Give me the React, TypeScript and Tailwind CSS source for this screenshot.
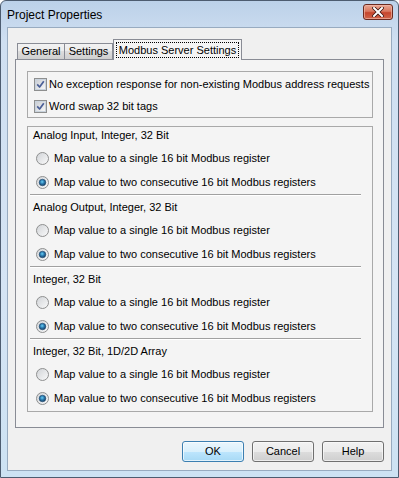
import React from "react"

const font = "font-['Liberation_Sans','Arial',sans-serif]"

function CheckBox() {
  return (
    <span className="flex h-[13px] w-[13px] shrink-0 items-center justify-center border border-[#8e8f8f] bg-white">
      <span className="flex h-[11px] w-[11px] items-center justify-center border border-[#c9d3dd] bg-[linear-gradient(135deg,#cbcfd5,#f6f6f6)]">
        <svg width="9" height="9" viewBox="0 0 9 9">
          <path d="M1.2 4.4 L3.6 7 L7.8 1.2" fill="none" stroke="#4a5f97" strokeWidth="1.7" strokeLinejoin="round" />
        </svg>
      </span>
    </span>
  )
}

function Radio({ on, id }: { on?: boolean; id: string }) {
  return (
    <svg width="13" height="13" viewBox="0 0 13 13" className="shrink-0">
      <defs>
        <linearGradient id={`rb-${id}`} x1="0" y1="0" x2="1" y2="1">
          <stop offset="0" stopColor="#cfd2d6" />
          <stop offset="1" stopColor="#fbfbfb" />
        </linearGradient>
        <radialGradient id={`rd-${id}`} cx="0.45" cy="0.4" r="0.6">
          <stop offset="0" stopColor="#6ad0f5" />
          <stop offset="0.5" stopColor="#2b7bb0" />
          <stop offset="1" stopColor="#173e62" />
        </radialGradient>
      </defs>
      <circle cx="6.5" cy="6.5" r="6" fill={`url(#rb-${id})`} stroke="#8e8f8f" />
      {on && <circle cx="6.5" cy="6.5" r="3.3" fill={`url(#rd-${id})`} stroke="#1e4a70" strokeWidth="0.6" />}
    </svg>
  )
}

function Section({ title, id, last }: { title: string; id: string; last?: boolean }) {
  return (
    <div className="flex flex-col">
      <div className="flex h-[17px] items-center pl-[5px]">{title}</div>
      <div className="h-[2px]" />
      <div className="flex h-[24px] items-center gap-[5px] pl-[8px]">
        <Radio id={`${id}a`} />
        <span>Map value to a single 16 bit Modbus register</span>
      </div>
      <div className="flex h-[24px] items-center gap-[5px] pl-[8px]">
        <Radio on id={`${id}b`} />
        <span>Map value to two consecutive 16 bit Modbus registers</span>
      </div>
      {!last && (
        <>
          <div className="ml-[2px] mr-[11px] h-[2px] border-t border-b border-t-[#a0a0a0] border-b-white" />
          <div className="h-[3px]" />
        </>
      )}
    </div>
  )
}

function Button({ label, primary }: { label: string; primary?: boolean }) {
  return (
    <div
      className={
        primary
          ? "flex h-[21px] w-[62px] items-center justify-center rounded-[3px] border border-[#3c7fb1] bg-[linear-gradient(#eaf6fd,#d9f0fc_50%,#bee6fd_50%,#a7d9f5)] shadow-[inset_0_0_0_1px_#ffffffaa]"
          : "flex h-[21px] w-[62px] items-center justify-center rounded-[3px] border border-[#707070] bg-[linear-gradient(#f2f2f2,#ebebeb_50%,#dddddd_50%,#cfcfcf)] shadow-[inset_0_0_0_1px_#fcfcfcaa]"
      }
    >
      {label}
    </div>
  )
}

export default function App() {
  return (
    <div className={`${font} h-[478px] w-[399px] overflow-hidden text-[11px] text-black`}>
      <div className="flex h-full w-full flex-col rounded-t-[6px] border border-[#4d5c70] bg-[linear-gradient(#bcd1e9,#cfdff1_40px,#d5e4f4_60%,#cde2f3)]">
        {/* Title bar */}
        <div className="flex h-[26px] items-start justify-between">
          <span className="mt-[5px] pl-[6px] text-[12px]">Project Properties</span>
          <div className="mr-[5px] mt-[3px] flex h-[16px] w-[30px] items-center justify-center rounded-[3px] border border-[#6b2a20] bg-[linear-gradient(#e9a794,#d9775f_45%,#c6452c_55%,#d0664c)] shadow-[inset_0_0_0_1px_#f2b9a9aa]">
            <svg width="12" height="10" viewBox="0 0 12 10">
              <path d="M2 1 L10 9 M10 1 L2 9" stroke="#3b1410" strokeWidth="3.6" strokeLinecap="square" />
              <path d="M2 1 L10 9 M10 1 L2 9" stroke="#ffffff" strokeWidth="2" strokeLinecap="square" />
            </svg>
          </div>
        </div>

        {/* Client */}
        <div className="mx-[6px] flex h-[444px] flex-col border border-[#98abc0] bg-[#f0f0f0] px-[7px] pt-[11px]">
          {/* Tabs */}
          <div className="flex h-[20px] items-end pl-[2px]">
            <div className="flex h-[16px] w-[48px] items-center justify-center border border-b-0 border-[#898c95] bg-[linear-gradient(#f2f2f2,#ebebeb_50%,#dddddd_50%,#cfcfcf)]">
              General
            </div>
            <div className="flex h-[16px] w-[48px] items-center justify-center border border-b-0 border-l-0 border-[#898c95] bg-[linear-gradient(#f2f2f2,#ebebeb_50%,#dddddd_50%,#cfcfcf)]">
              Settings
            </div>
            <div className="relative z-10 -mb-px flex h-[21px] w-[129px] items-start justify-center border border-b-0 border-[#898c95] bg-[#f4f4f4] pt-[2px]">
              <span className="flex h-[16px] items-center border border-dotted border-black px-[2px]">
                Modbus Server Settings
              </span>
            </div>
          </div>

          {/* Panel */}
          <div className="flex h-[369px] flex-col border border-[#898c95] bg-[#f4f4f4] pb-[15px] pl-[11px] pr-[10px] pt-[11px]">
            <div className="flex h-[47px] flex-col border border-[#a9a9a9] pt-[1px]">
              <div className="flex h-[22px] items-center gap-[2px] pl-[6px]">
                <CheckBox />
                <span>No exception response for non-existing Modbus address requests</span>
              </div>
              <div className="flex h-[22px] items-center gap-[2px] pl-[6px]">
                <CheckBox />
                <span>Word swap 32 bit tags</span>
              </div>
            </div>
            <div className="mt-[8px] flex h-[286px] flex-col border border-[#a9a9a9]">
              <Section id="s1" title="Analog Input, Integer, 32 Bit" />
              <Section id="s2" title="Analog Output, Integer, 32 Bit" />
              <Section id="s3" title="Integer, 32 Bit" />
              <Section id="s4" title="Integer, 32 Bit, 1D/2D Array" last />
            </div>
          </div>

          {/* Buttons */}
          <div className="mt-[13px] flex justify-end gap-[8px]">
            <Button primary label="OK" />
            <Button label="Cancel" />
            <Button label="Help" />
          </div>
        </div>
      </div>
    </div>
  )
}
